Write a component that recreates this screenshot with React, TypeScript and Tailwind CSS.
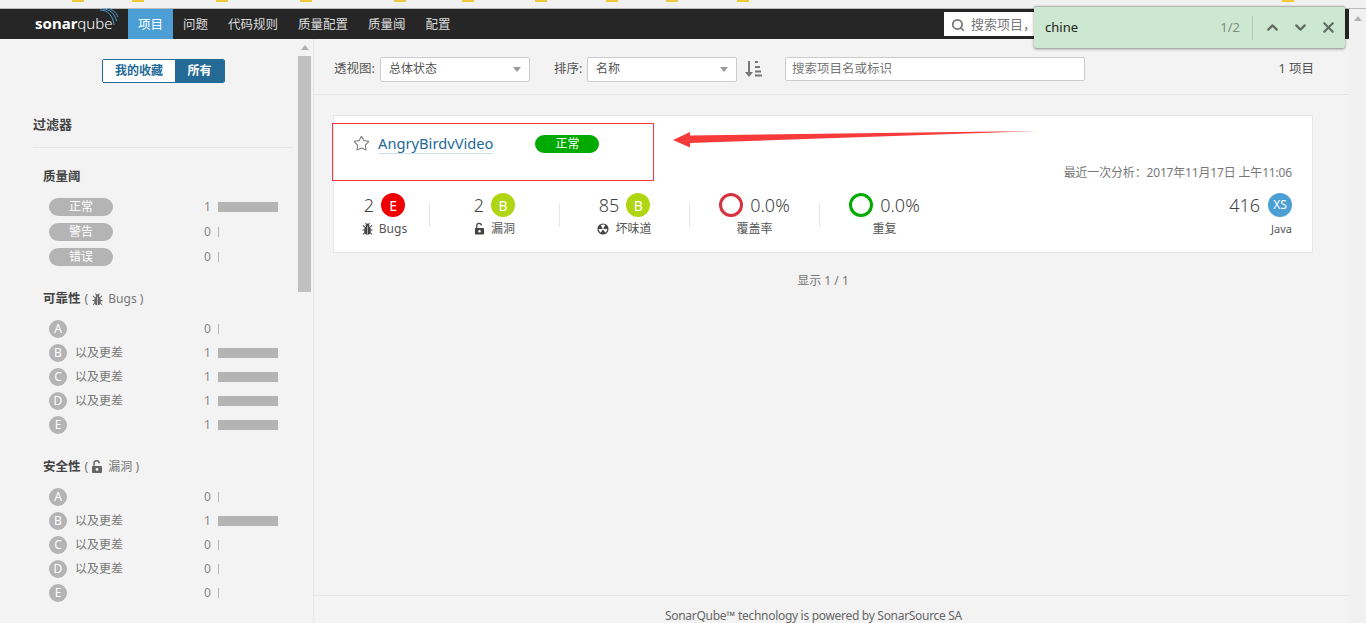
import { ChevronDown, ChevronUp, Search, Star, X } from 'lucide-react';

const ticks = [
  'ml-[72px]',
  'ml-[48px]',
  'ml-[72px]',
  'ml-[72px]',
  'ml-[82px]',
  'ml-[56px]',
  'ml-[61px]',
  'ml-[59px]',
  'ml-[48px]',
  'ml-[59px]',
  'ml-[533px]',
];

const navItems = ['项目', '问题', '代码规则', '质量配置', '质量阈', '配置'];

function BugIcon({ className }: { className?: string }) {
  return (
    <svg viewBox="0 0 12 14" className={className} fill="currentColor">
      <ellipse cx="6" cy="8.5" rx="3.6" ry="4.8" />
      <circle cx="6" cy="3" r="2" />
      <path d="M3 5 1 3M9 5l2-2M2.8 8H.5M9.2 8h2.3M3 11l-2 2M9 11l2 2M4.6 1.6 3.8.4M7.4 1.6 8.2.4" stroke="currentColor" strokeWidth="1.1" fill="none" />
      <path d="M6 4v9" stroke="#fff" strokeWidth="0.6" />
    </svg>
  );
}

function LockIcon({ className }: { className?: string }) {
  return (
    <svg viewBox="0 0 12 14" className={className} fill="currentColor">
      <path d="M3 6V3.6a2.6 2.6 0 0 1 5.2-.4" fill="none" stroke="currentColor" strokeWidth="1.4" />
      <path fillRule="evenodd" d="M2 6h8a1 1 0 0 1 1 1v5a1 1 0 0 1-1 1H2a1 1 0 0 1-1-1V7a1 1 0 0 1 1-1Zm4 2a1.4 1.4 0 1 0 0 2.8A1.4 1.4 0 0 0 6 8Z" />
    </svg>
  );
}

function SmellIcon({ className }: { className?: string }) {
  return (
    <svg viewBox="0 0 14 14" className={className}>
      <circle cx="7" cy="7" r="6.5" fill="currentColor" />
      <path d="M7 7 4.4 2.6a5 5 0 0 1 5.2 0ZM7 7h5a5 5 0 0 1-2.5 4.4ZM7 7l-2.5 4.4A5 5 0 0 1 2 7Z" fill="#fff" />
      <circle cx="7" cy="7" r="1" fill="#fff" />
    </svg>
  );
}

function Caret() {
  return (
    <svg viewBox="0 0 8 5" className="h-[5px] w-2 text-[#999]" fill="currentColor">
      <path d="M0 0h8L4 5Z" />
    </svg>
  );
}

function Select({ label, className }: { label: string; className: string }) {
  return (
    <div className={`flex h-[25px] items-center justify-between rounded-[2px] border border-[#ccc] bg-white pl-2 pr-[8px] text-[12px] text-[#555] ${className}`}>
      <span>{label}</span>
      <Caret />
    </div>
  );
}

function Bar({ count }: { count: number }) {
  return (
    <div className="ml-auto flex w-[80px] items-center text-[12px] text-[#888]">
      <span className="w-[14px]">{count}</span>
      {count > 0 ? <div className="h-[10px] w-[60px] bg-[#b4b4b4]" /> : <div className="h-[10px] w-px bg-[#b4b4b4]" />}
    </div>
  );
}

function RatingRow({ letter, count, worse }: { letter: string; count: number; worse?: boolean }) {
  return (
    <div className="flex h-[24px] items-center first:h-[25px]">
      <span className="flex h-[18px] w-[18px] items-center justify-center rounded-full bg-[#b4b4b4] text-[12px] text-white">{letter}</span>
      {worse && <span className="ml-2 text-[12px] text-[#777]">以及更差</span>}
      <Bar count={count} />
    </div>
  );
}

function StatusRow({ label, count }: { label: string; count: number }) {
  return (
    <div className="flex h-[25px] items-center">
      <span className="flex h-[18px] w-[64px] items-center justify-center rounded-full bg-[#b4b4b4] text-[12px] text-white">{label}</span>
      <Bar count={count} />
    </div>
  );
}

function Rating({ letter, className }: { letter: string; className: string }) {
  return (
    <span className={`flex h-6 w-6 items-center justify-center rounded-full text-[14px] font-normal text-white ${className}`}>{letter}</span>
  );
}

function Measure({ value, badge, label, className }: { value: string; badge: React.ReactNode; label: React.ReactNode; className: string }) {
  return (
    <div className={`flex flex-col items-center ${className}`}>
      <div className="flex h-6 items-center gap-[7px] text-[18px] font-light text-[#444]">
        {value && <span>{value}</span>}
        {badge}
      </div>
      <div className="mt-[3px] flex h-[18px] items-center gap-[6px] text-[12px] text-[#555]">{label}</div>
    </div>
  );
}

function Divider() {
  return <div className="mt-[10px] h-6 w-px shrink-0 bg-[#e6e6e6]" />;
}

export default function App() {
  return (
    <div className="relative flex h-[623px] w-[1366px] flex-col overflow-hidden bg-[#f3f3f3] [font-family:'Noto_Sans','Noto_Sans_CJK_SC',sans-serif]">
      {/* Browser bookmark strip */}
      <div className="flex h-[9px] shrink-0 items-start border-b border-[#bbb] bg-[#f1f1f1]">
        {ticks.map((tick, i) => (
          <div key={i} className={`h-[2px] w-3 bg-[#f0c93a] ${tick}`} />
        ))}
      </div>

      <div className="flex min-h-0 flex-1">
        <div className="flex w-[1349px] flex-col">
          {/* Top nav */}
          <div className="flex h-[30px] shrink-0 items-center bg-[#262626] pl-[35px]">
            <div className="relative flex w-[93px] items-baseline pb-[1px] text-[15px] leading-none text-white">
              <span className="font-bold">sonar</span>
              <span className="font-light">qube</span>
              <svg viewBox="0 0 20 20" className="absolute left-[64px] top-[-8px] h-5 w-5 text-[#4b9fd5]" fill="none" stroke="currentColor" strokeWidth="1">
                <path d="M1 2c8 0 13 6 14 15M4 1c7 0 12 5 13.500 12M8 0c5 1 9 4 11 9" />
              </svg>
            </div>
            {navItems.map((item, i) => (
              <div
                key={item}
                className={`flex h-full items-center px-[10px] pt-[3px] text-[12.5px] ${i === 0 ? 'bg-[#4b9fd5] text-white' : 'text-[#ddd]'}`}
              >
                {item}
              </div>
            ))}
            <div className="ml-auto mr-[5px] flex h-6 w-[400px] items-center gap-[6px] bg-white pl-[7px] text-[13px] text-[#777]">
              <Search className="mt-[1px] h-[14px] w-[14px] text-[#777]" strokeWidth={3} />
              <span className="pt-[2px]">搜索项目，</span>
            </div>
          </div>

          <div className="flex min-h-0 flex-1">
            {/* Sidebar */}
            <div className="flex w-[314px] shrink-0 border-r border-[#e6e6e6]">
              <div className="w-[298px] shrink-0 pl-[33px] pr-[5px]">
                <div className="mt-5 flex justify-center pl-[1px]">
                  <div className="flex h-6 overflow-hidden rounded-[2px] border border-[#236a97] text-[12px] font-bold">
                    <span className="flex w-[72px] items-center justify-center bg-white text-[#236a97]">我的收藏</span>
                    <span className="flex w-[49px] items-center justify-center bg-[#236a97] text-white">所有</span>
                  </div>
                </div>
                <div className="mt-[30px] border-b border-[#e6e6e6] pb-[12px] text-[13px] font-bold leading-[22px] text-[#444]">过滤器</div>
                <div className="pl-[10px] pr-[9px]">
                  <div className="mt-[19px] text-[12.5px] font-bold leading-[20px] text-[#444]">质量阈</div>
                  <div className="mt-[7px] pl-[6px]">
                    <StatusRow label="正常" count={1} />
                    <StatusRow label="警告" count={0} />
                    <StatusRow label="错误" count={0} />
                  </div>
                  <div className="mt-[20px] flex items-center text-[12.5px] leading-[20px] text-[#777]">
                    <span className="font-bold text-[#444]">可靠性</span>
                    <span className="ml-1">(</span>
                    <BugIcon className="ml-1 h-[13px] w-[11px] text-[#666]" />
                    <span className="ml-[5px] text-[12px]">Bugs )</span>
                  </div>
                  <div className="mt-[7px] pl-[6px]">
                    <RatingRow letter="A" count={0} />
                    <RatingRow letter="B" count={1} worse />
                    <RatingRow letter="C" count={1} worse />
                    <RatingRow letter="D" count={1} worse />
                    <RatingRow letter="E" count={1} />
                  </div>
                  <div className="mt-[20px] flex items-center text-[12.5px] leading-[20px] text-[#777]">
                    <span className="font-bold text-[#444]">安全性</span>
                    <span className="ml-1">(</span>
                    <LockIcon className="ml-[3px] h-[14px] w-3 text-[#666]" />
                    <span className="ml-[5px] text-[12px]">漏洞 )</span>
                  </div>
                  <div className="mt-[7px] pl-[6px]">
                    <RatingRow letter="A" count={0} />
                    <RatingRow letter="B" count={1} worse />
                    <RatingRow letter="C" count={0} worse />
                    <RatingRow letter="D" count={0} worse />
                    <RatingRow letter="E" count={0} />
                  </div>
                </div>
              </div>
              {/* Sidebar scrollbar */}
              <div className="flex w-[13px] shrink-0 flex-col items-center pt-[6px]">
                <svg viewBox="0 0 8 5" className="h-[5px] w-2 text-[#b0b0b0]" fill="currentColor">
                  <path d="M0 5h8L4 0Z" />
                </svg>
                <div className="mt-[6px] h-[236px] w-full bg-[#c0c0c0]" />
              </div>
            </div>

            {/* Main */}
            <div className="flex min-w-0 flex-1 flex-col">
              <div className="flex h-[56px] shrink-0 items-center border-b border-[#e6e6e6] pl-[20px] pr-[35px] pt-[5px] text-[12.5px] text-[#555]">
                <span className="w-[46px]">透视图:</span>
                <Select label="总体状态" className="w-[150px]" />
                <span className="ml-[24px] w-[33px]">排序:</span>
                <Select label="名称" className="w-[150px]" />
                <svg viewBox="0 0 17 16" className="ml-[8px] h-4 w-[17px] text-[#777]" fill="currentColor">
                  <path d="M3 0h2v11h3l-4 5-4-5h3ZM10 0h3v2h-3ZM10 5h5v2h-5ZM10 9.500h6v2h-6ZM10 13.500h7v2h-7Z" />
                </svg>
                <div className="ml-[23px] flex h-6 w-[300px] items-center rounded-[2px] border border-[#ccc] bg-white pl-[6px] text-[12.5px] text-[#777]">
                  搜索项目名或标识
                </div>
                <span className="ml-auto">1 项目</span>
              </div>

              <div className="min-h-0 flex-1 pl-[19px] pr-[36px] pt-[20px]">
                {/* Project card */}
                <div className="h-[138px] border border-[#e6e6e6] bg-white">
                  <div className="flex h-[37px] items-center pl-[19px] pt-[18px]">
                    <Star className="h-[17px] w-[17px] text-[#777]" strokeWidth={1.5} />
                    <span className="ml-[8px] border-b border-[#cfe0ec] text-[14.7px] leading-[19px] text-[#236a97]">AngryBirdvVideo</span>
                    <span className="ml-[42px] flex h-[18px] w-[64px] items-center justify-center rounded-full bg-[#00aa00] text-[12px] text-white">正常</span>
                  </div>
                  <div className="mt-[11px] pr-[20px] text-right text-[12px] leading-[18px] tracking-[-0.17px] text-[#777]">最近一次分析：2017年11月17日 上午11:06</div>
                  <div className="mt-[11px] flex items-start pr-[20px]">
                    <Measure
                      className="w-[95px] pl-[6px]"
                      value="2"
                      badge={<Rating letter="E" className="bg-[#ee0000]" />}
                      label={<><BugIcon className="h-[14px] w-[11px] text-[#444]" /><span>Bugs</span></>}
                    />
                    <Divider />
                    <Measure
                      className="w-[129px]"
                      value="2"
                      badge={<Rating letter="B" className="bg-[#b0d513]" />}
                      label={<><LockIcon className="h-[14px] w-[11px] text-[#444]" /><span>漏洞</span></>}
                    />
                    <Divider />
                    <Measure
                      className="w-[129px]"
                      value="85"
                      badge={<Rating letter="B" className="bg-[#b0d513]" />}
                      label={<><SmellIcon className="h-3 w-3 text-[#444]" /><span>坏味道</span></>}
                    />
                    <Divider />
                    <Measure
                      className="w-[129px]"
                      value=""
                      badge={<><span className="h-6 w-6 rounded-full border-[3px] border-[#d4333f]" /><span>0.0%</span></>}
                      label={<span>覆盖率</span>}
                    />
                    <Divider />
                    <Measure
                      className="w-[129px]"
                      value=""
                      badge={<><span className="h-6 w-6 rounded-full border-[3px] border-[#00aa00]" /><span>0.0%</span></>}
                      label={<span>重复</span>}
                    />
                    <div className="ml-auto flex flex-col items-end">
                      <div className="flex h-6 items-center gap-2 text-[18px] font-light text-[#444]">
                        <span>416</span>
                        <span className="flex h-6 w-6 items-center justify-center rounded-full bg-[#4b9fd5] text-[12px] font-normal text-white">XS</span>
                      </div>
                      <div className="mt-[3px] text-[11px] leading-[18px] text-[#555]">Java</div>
                    </div>
                  </div>
                </div>
                <div className="mt-[19px] text-center text-[12px] leading-[18px] text-[#777]">显示 1 / 1</div>
              </div>

              <div className="h-[28px] shrink-0 border-t border-[#e6e6e6] pr-[36px] pt-[11px] text-center text-[12px] leading-[18px] tracking-[-0.3px] text-[#666]">
                SonarQube™ technology is powered by SonarSource SA
              </div>
            </div>
          </div>
        </div>

        {/* Page scrollbar */}
        <div className="flex flex-1 justify-center bg-[#f1f1f1] pt-[7px]">
          <svg viewBox="0 0 8 5" className="h-[5px] w-2 text-[#b0b0b0]" fill="currentColor">
            <path d="M0 5h8L4 0Z" />
          </svg>
        </div>
      </div>

      {/* Find bar overlay */}
      <div className="absolute left-[1034px] top-[6px] flex h-[42px] w-[311px] items-center rounded-[2px] border-t border-[#b5b5b5] bg-[#cde8d0] pl-[11px] shadow-[0_1px_3px_rgba(0,0,0,0.45)]">
        <span className="text-[13px] text-[#222]">chine</span>
        <span className="ml-auto text-[13px] text-[#7f8f82]">1/2</span>
        <div className="ml-[12px] h-6 w-px bg-[#b2c8b5]" />
        <ChevronUp className="ml-[11px] h-[17px] w-[17px] text-[#5f6b62]" strokeWidth={3} />
        <ChevronDown className="ml-[11px] h-[17px] w-[17px] text-[#5f6b62]" strokeWidth={3} />
        <X className="ml-[11px] mr-[8px] h-[17px] w-[17px] text-[#5f6b62]" strokeWidth={3} />
      </div>

      {/* Red annotation over the screenshot */}
      <div className="absolute left-[332px] top-[123px] h-[58px] w-[322px] border border-[#f33b3b]" />
      <svg className="absolute left-[670px] top-[125px] h-[30px] w-[375px]" viewBox="0 0 375 30">
        <defs>
          <linearGradient id="arrowFade" x1="0" x2="1" y1="0" y2="0">
            <stop offset="0.88" stopColor="#f73b3b" />
            <stop offset="1" stopColor="#f73b3b" stopOpacity="0.25" />
          </linearGradient>
        </defs>
        <path d="M3 15 20 7 20 10.500 372 6 20 18 20 22.500Z" fill="url(#arrowFade)" />
      </svg>
    </div>
  );
}
